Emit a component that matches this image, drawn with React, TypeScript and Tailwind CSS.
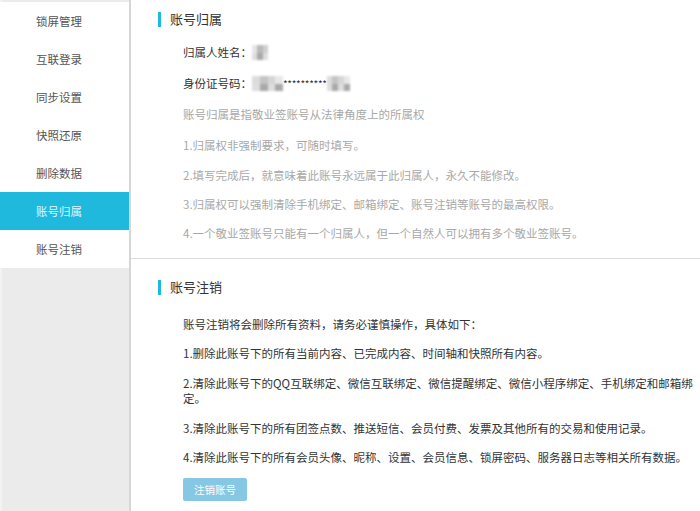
import React from "react";

const menu = ["锁屏管理", "互联登录", "同步设置", "快照还原", "删除数据", "账号归属", "账号注销"];

function Blob({ w }: { w: number }) {
  const cells = w === 16 ? ["#e6e6e6", "#b9b9b9", "#cfcfcf"] : ["#dcdcdc", "#c4c4c4", "#d6d6d6", "#e8e8e8"];
  return (
    <span className="inline-flex h-[15px] align-middle blur-[1.2px]" style={{ width: w }}>
      {cells.map((c, i) => (
        <span key={i} className="flex-1 h-full flex flex-col">
          <span className="flex-1" style={{ background: c }} />
          <span className="flex-1" style={{ background: i % 2 ? "#a9a9a9" : "#dedede" }} />
        </span>
      ))}
    </span>
  );
}

function Title({ text }: { text: string }) {
  return (
    <div className="flex items-center h-[16px] pl-[27px]">
      <span className="w-[3px] h-[15px] bg-[#1fb8de]" />
      <span className="ml-[9px] text-[13px] leading-[16px] text-[#333]">{text}</span>
    </div>
  );
}

export default function App() {
  return (
    <div className="flex w-[700px] h-[511px] overflow-hidden bg-white font-['Noto_Sans_CJK_SC',sans-serif]">
      <aside className="w-[129px] shrink-0 bg-[#ebebeb] flex flex-col pt-[2px] border-l-2 border-[#f3f3f3]">
        {menu.map((m) => {
          const active = m === "账号归属";
          return (
            <div
              key={m}
              className={
                "h-[38px] -ml-[2px] flex items-center pl-[36px] pt-[1px] text-[11.5px] " +
                (active ? "bg-[#1fb9de] text-[#dff6ff]" : "bg-white text-[#555]")
              }
            >
              {m}
            </div>
          );
        })}
      </aside>
      <main className="flex-1 border-l-2 border-[#d6d6d6] flex flex-col">
        <section className="h-[259px] border-b border-[#dcdcdc] pt-[11px]">
          <Title text="账号归属" />
          <div className="pl-[52px] text-[11.5px] leading-[15px]">
            <p className="mt-[18px] text-[#333] flex items-center">
              归属人姓名：<Blob w={16} />
            </p>
            <p className="mt-[16px] text-[#333] flex items-center">
              身份证号码：<Blob w={31} />
              <span className="text-[10px] tracking-[-0.3px]">**********</span>
              <Blob w={23} />
            </p>
            <p className="mt-[16px] text-[#a8a8a8]">账号归属是指敬业签账号从法律角度上的所属权</p>
            <p className="mt-[16px] text-[#a8a8a8]">1.归属权非强制要求，可随时填写。</p>
            <p className="mt-[15px] text-[#a8a8a8]">2.填写完成后，就意味着此账号永远属于此归属人，永久不能修改。</p>
            <p className="mt-[14px] text-[#a8a8a8]">3.归属权可以强制清除手机绑定、邮箱绑定、账号注销等账号的最高权限。</p>
            <p className="mt-[14px] text-[#a8a8a8]">4.一个敬业签账号只能有一个归属人，但一个自然人可以拥有多个敬业签账号。</p>
          </div>
        </section>
        <section className="pt-[20px]">
          <Title text="账号注销" />
          <div className="pl-[52px] text-[11.5px] leading-[15px] text-[#333]">
            <p className="mt-[22px]">账号注销将会删除所有资料，请务必谨慎操作，具体如下：</p>
            <p className="mt-[14px]">1.删除此账号下的所有当前内容、已完成内容、时间轴和快照所有内容。</p>
            <p className="mt-[15px] whitespace-nowrap">
              2.清除此账号下的QQ互联绑定、微信互联绑定、微信提醒绑定、微信小程序绑定、手机绑定和邮箱绑
              <br />
              定。
            </p>
            <p className="mt-[15px]">3.清除此账号下的所有团签点数、推送短信、会员付费、发票及其他所有的交易和使用记录。</p>
            <p className="mt-[14px] whitespace-nowrap">4.清除此账号下的所有会员头像、昵称、设置、会员信息、锁屏密码、服务器日志等相关所有数据。</p>
            <button className="mt-[13px] w-[64px] h-[23px] rounded-[2px] bg-[#86c7e3] text-white text-[10.5px] leading-[23px]">
              注销账号
            </button>
          </div>
        </section>
      </main>
    </div>
  );
}
